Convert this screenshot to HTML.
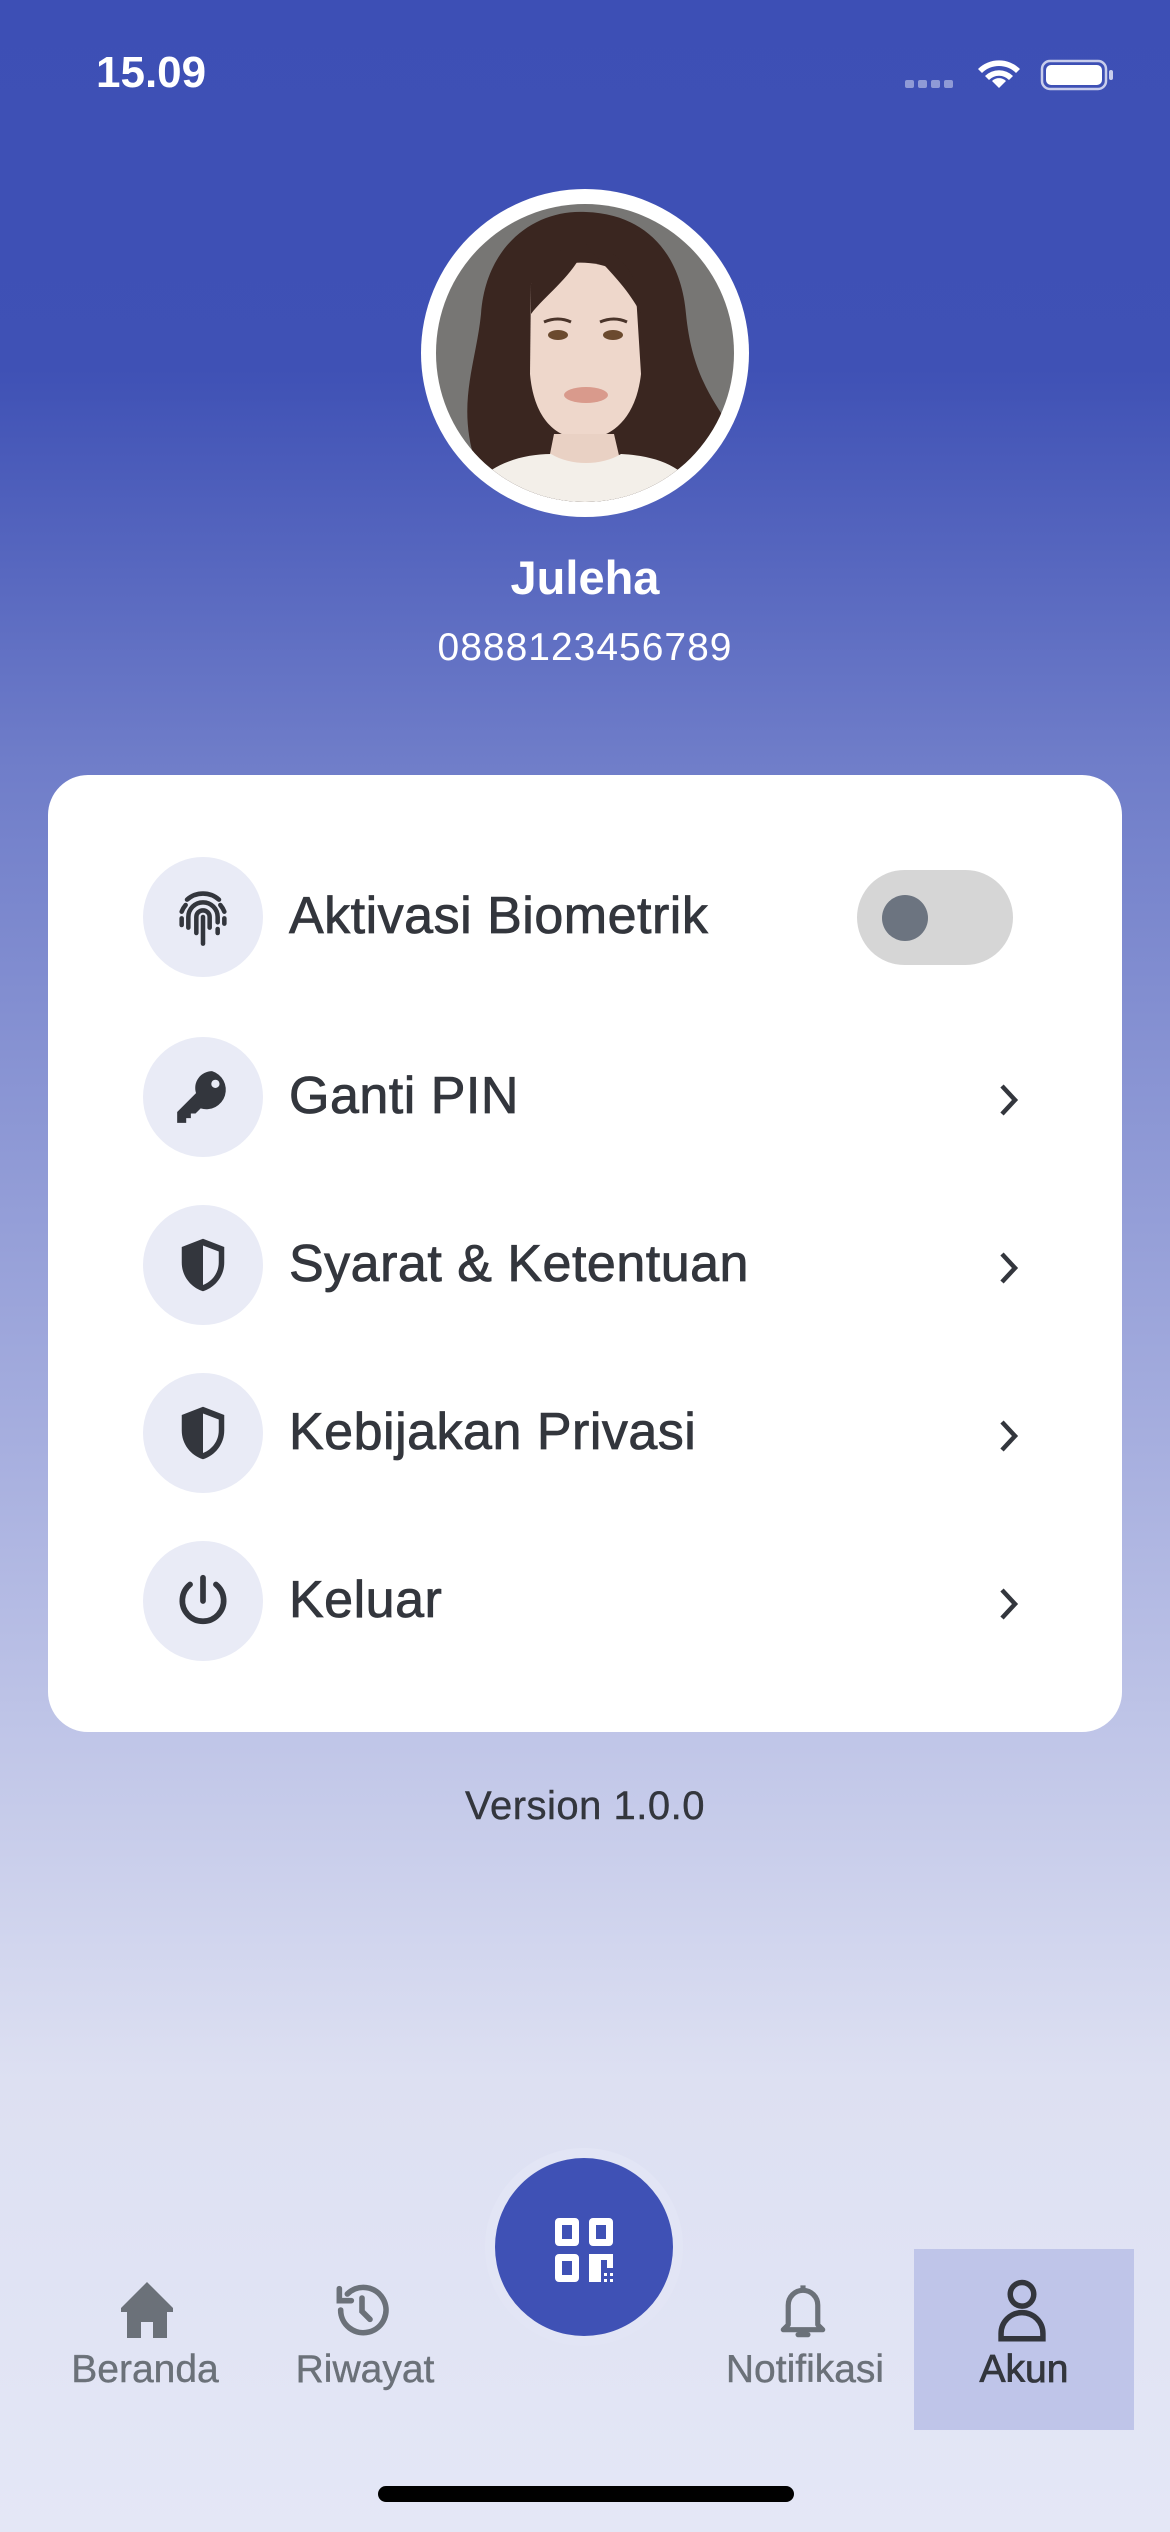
<!DOCTYPE html>
<html><head><meta charset="utf-8">
<style>
*{margin:0;padding:0;box-sizing:border-box}
body{width:1170px;height:2532px;overflow:hidden;font-family:"Liberation Sans",Roboto,sans-serif;position:relative;background:#e4e7f6}
.bg{position:absolute;inset:0;background:linear-gradient(180deg,#3d4fb5 0px,#3f51b5 370px,#6f7dc9 760px,#a7afdf 1450px,#dde0f2 2080px,#e4e7f6 2532px)}
.abs{position:absolute}
.time{left:96px;top:48px;color:#fff;font-size:44px;font-weight:600}
.avatar{left:421px;top:189px;width:328px;height:328px;border-radius:50%;background:#fff}
.name{left:0;width:1170px;top:550px;text-align:center;color:#fff;font-size:47px;font-weight:700}
.phone{left:0;width:1170px;top:626px;text-align:center;color:#fff;font-size:39px;letter-spacing:1px}
.card{left:48px;top:775px;width:1074px;height:957px;background:#fff;border-radius:40px}
.ic{position:absolute;left:143px;width:120px;height:120px;border-radius:50%;background:#e9ebf6;display:flex;align-items:center;justify-content:center}
.lbl{position:absolute;left:289px;font-size:52px;color:#33363d;-webkit-text-stroke:0.8px #33363d;letter-spacing:0.5px}
.chev{position:absolute;left:996px}
.ver{left:0;width:1170px;top:1784px;text-align:center;color:#33363d;font-size:40px;letter-spacing:0.5px;-webkit-text-stroke:0.4px #33363d}
.nav{font-size:39px;color:#6b7179;text-align:center;position:absolute;top:2348px;-webkit-text-stroke:0.4px #6b7179}
</style></head><body>
<div class="bg"></div>
<div class="abs time">15.09</div>
<svg class="abs" style="left:905px;top:58px" width="210" height="34" viewBox="0 0 210 34">
<g fill="#8f9ad6"><rect x="0" y="22" width="9" height="8" rx="2"/><rect x="13" y="22" width="9" height="8" rx="2"/><rect x="26" y="22" width="9" height="8" rx="2"/><rect x="39" y="22" width="9" height="8" rx="2"/></g>
<g fill="#fff"><path d="M94 30 l-7 -7 a10 10 0 0 1 14 0z"/><path d="M80 18 a20 20 0 0 1 28 0 l-4 4 a14 14 0 0 0 -20 0z"/><path d="M73 11 a30 30 0 0 1 42 0 l-4 4 a24 24 0 0 0 -34 0z"/></g>
<rect x="137" y="3" width="64" height="28" rx="8" fill="none" stroke="#c8cdec" stroke-width="2.5"/>
<rect x="141" y="7" width="56" height="20" rx="5" fill="#fff"/>
<rect x="204" y="12" width="4" height="10" rx="2" fill="#c8cdec"/>
</svg>
<div class="abs avatar"></div>
<svg class="abs" style="left:436px;top:204px" width="298" height="298" viewBox="0 0 298 298">
<defs><clipPath id="c"><circle cx="149" cy="149" r="149"/></clipPath></defs>
<g clip-path="url(#c)">
<rect width="298" height="298" fill="#777674"/>
<path d="M40 260 C20 200 40 160 45 110 C50 40 100 5 150 8 C210 10 245 50 250 110 C255 160 270 190 300 230 L300 298 L20 298Z" fill="#3a2620"/>
<path d="M95 80 C110 50 190 50 200 90 L205 170 C200 215 175 235 148 235 C120 235 98 215 94 170Z" fill="#eed7cb"/>
<path d="M118 230 L178 230 L185 260 L112 260Z" fill="#e9d1c4"/>
<path d="M30 298 C40 265 80 250 115 250 C135 262 165 262 185 250 C225 252 255 265 265 298Z" fill="#f3efe9"/>
<path d="M95 80 C110 40 150 40 150 40 C140 70 110 90 95 110Z" fill="#3a2620"/>
<path d="M150 40 C190 45 205 80 205 110 C190 80 165 60 150 40Z" fill="#3a2620"/>
<ellipse cx="122" cy="131" rx="10" ry="5" fill="#6b4a2e"/><ellipse cx="177" cy="131" rx="10" ry="5" fill="#6b4a2e"/>
<path d="M108 118 q14 -6 27 0" stroke="#4a342a" stroke-width="3" fill="none"/><path d="M164 118 q14 -6 27 0" stroke="#4a342a" stroke-width="3" fill="none"/>
<ellipse cx="150" cy="191" rx="22" ry="8" fill="#d99a8c"/>
</g></svg>
<div class="abs name">Juleha</div>
<div class="abs phone">0888123456789</div>

<div class="abs card"></div>
<div class="ic" style="top:857px">
<svg width="64" height="64" viewBox="0 0 24 24" fill="none" stroke="#33363d" stroke-width="1.7" stroke-linecap="round"><path d="M6 5.5a9 9 0 0 1 12 0"/><path d="M4 10a8.5 8.5 0 0 1 1.5-2.5"/><path d="M20 10a8.5 8.5 0 0 0-1.5-2.5"/><path d="M6.5 16v-4a5.5 5.5 0 0 1 11 0v2"/><path d="M9.5 18v-6a2.5 2.5 0 0 1 5 0v4"/><path d="M12 12v10"/><path d="M17.5 16.5v1.5"/><path d="M4 12.5v2.5"/><path d="M20 12.5v2"/></svg></div>
<div class="lbl" style="top:886px">Aktivasi Biometrik</div>
<div class="abs" style="left:857px;top:870px;width:156px;height:95px;border-radius:48px;background:#d6d6d6"></div>
<div class="abs" style="left:882px;top:895px;width:46px;height:46px;border-radius:50%;background:#6c7480"></div>

<div class="ic" style="top:1037px"><svg width="62" height="62" viewBox="0 0 24 24"><path fill="#33363d" d="M15.5 2a6.5 6.5 0 0 0-6.2 8.5L2 17.8V22h3.5v-1.8h1.8v-1.8h1.8l2-2A6.5 6.5 0 1 0 15.5 2zm1.3 3.3a1.6 1.6 0 1 1 0 3.2 1.6 1.6 0 0 1 0-3.2z"/></svg></div>
<div class="lbl" style="top:1066px">Ganti PIN</div>

<div class="ic" style="top:1205px"><svg width="60" height="60" viewBox="0 0 24 24"><path fill="#33363d" d="M12 1.5 L3.5 4.8 V11 c0 5.5 3.7 10 8.5 11.5 c4.8-1.5 8.5-6 8.5-11.5 V4.8 Z M12 4.2 l6.3 2.4 V11 c0 4.1-2.6 7.6-6.3 9 Z"/></svg></div>
<div class="lbl" style="top:1234px">Syarat &amp; Ketentuan</div>

<div class="ic" style="top:1373px"><svg width="60" height="60" viewBox="0 0 24 24"><path fill="#33363d" d="M12 1.5 L3.5 4.8 V11 c0 5.5 3.7 10 8.5 11.5 c4.8-1.5 8.5-6 8.5-11.5 V4.8 Z M12 4.2 l6.3 2.4 V11 c0 4.1-2.6 7.6-6.3 9 Z"/></svg></div>
<div class="lbl" style="top:1402px">Kebijakan Privasi</div>

<div class="ic" style="top:1541px"><svg width="62" height="62" viewBox="0 0 24 24" fill="none" stroke="#33363d" stroke-width="2.2" stroke-linecap="round"><path d="M12 3v9"/><path d="M7 5.6a8 8 0 1 0 10 0"/></svg></div>
<div class="lbl" style="top:1570px">Keluar</div>

<svg class="chev" style="top:1081px" width="26" height="38" viewBox="0 0 26 38"><path d="M6 5l13 14-13 14" fill="none" stroke="#33363d" stroke-width="4.5"/></svg>
<svg class="chev" style="top:1249px" width="26" height="38" viewBox="0 0 26 38"><path d="M6 5l13 14-13 14" fill="none" stroke="#33363d" stroke-width="4.5"/></svg>
<svg class="chev" style="top:1417px" width="26" height="38" viewBox="0 0 26 38"><path d="M6 5l13 14-13 14" fill="none" stroke="#33363d" stroke-width="4.5"/></svg>
<svg class="chev" style="top:1585px" width="26" height="38" viewBox="0 0 26 38"><path d="M6 5l13 14-13 14" fill="none" stroke="#33363d" stroke-width="4.5"/></svg>

<div class="abs ver">Version 1.0.0</div>

<div class="abs" style="left:914px;top:2249px;width:220px;height:181px;background:#bfc5e9"></div>
<div class="abs" style="left:485px;top:2148px;width:198px;height:198px;border-radius:50%;background:#e2e5f5"></div>
<div class="abs" style="left:495px;top:2158px;width:178px;height:178px;border-radius:50%;background:#3f51b5"></div>
<svg class="abs" style="left:553px;top:2218px" width="64" height="70" viewBox="0 0 64 70" fill="#fff">
<path fill-rule="evenodd" d="M2 4a4 4 0 0 1 4-4h16a4 4 0 0 1 4 4v20a4 4 0 0 1-4 4H6a4 4 0 0 1-4-4zM9 7v14h10V7z"/>
<path fill-rule="evenodd" d="M36 4a4 4 0 0 1 4-4h16a4 4 0 0 1 4 4v20a4 4 0 0 1-4 4H40a4 4 0 0 1-4-4zM43 7v14h10V7z"/>
<path fill-rule="evenodd" d="M2 40a4 4 0 0 1 4-4h16a4 4 0 0 1 4 4v20a4 4 0 0 1-4 4H6a4 4 0 0 1-4-4zM9 43v14h10V43z"/>
<path d="M36 36h24v14h-6v-8h-6v22h-12z"/><rect x="51" y="55" width="3" height="3"/><rect x="57" y="55" width="3" height="3"/><rect x="51" y="61" width="3" height="3"/><rect x="57" y="61" width="3" height="3"/>
</svg>

<svg class="abs" style="left:115px;top:2280px" width="64" height="60" viewBox="0 0 64 60"><path fill="#6b7179" d="M32 2 L6 28 v4 h6 v26 h14 v-16 h12 v16 h14 v-26 h6 v-4 z"/></svg>
<svg class="abs" style="left:330px;top:2278px" width="64" height="64" viewBox="0 0 24 24" fill="none" stroke="#6b7179" stroke-width="2.1" stroke-linecap="round"><path d="M4 12a8.5 8.5 0 1 0 2.5-6"/><path d="M3.5 4v4.5H8"/><path d="M12 7.5v5l3 3"/></svg>
<svg class="abs" style="left:773px;top:2278px" width="60" height="64" viewBox="0 0 24 26" fill="none" stroke="#6b7179" stroke-width="2.1"><path d="M12 3v1.5"/><path d="M6 19V11a6 6 0 0 1 12 0v8l2 2H4z" stroke-linejoin="round"/><path d="M10 23h4" stroke-linecap="round"/></svg>
<svg class="abs" style="left:990px;top:2276px" width="64" height="68" viewBox="0 0 24 26" fill="none" stroke="#33363d" stroke-width="2.1"><circle cx="12" cy="7" r="4.5"/><path d="M4 24v-2a8 8 0 0 1 16 0v2z"/></svg>

<div class="nav" style="left:55px;width:180px">Beranda</div>
<div class="nav" style="left:275px;width:180px">Riwayat</div>
<div class="nav" style="left:700px;width:210px">Notifikasi</div>
<div class="nav" style="left:934px;width:180px;color:#33363d;-webkit-text-stroke:0.8px #33363d">Akun</div>

<div class="abs" style="left:378px;top:2486px;width:416px;height:16px;border-radius:8px;background:#000"></div>
</body></html>
